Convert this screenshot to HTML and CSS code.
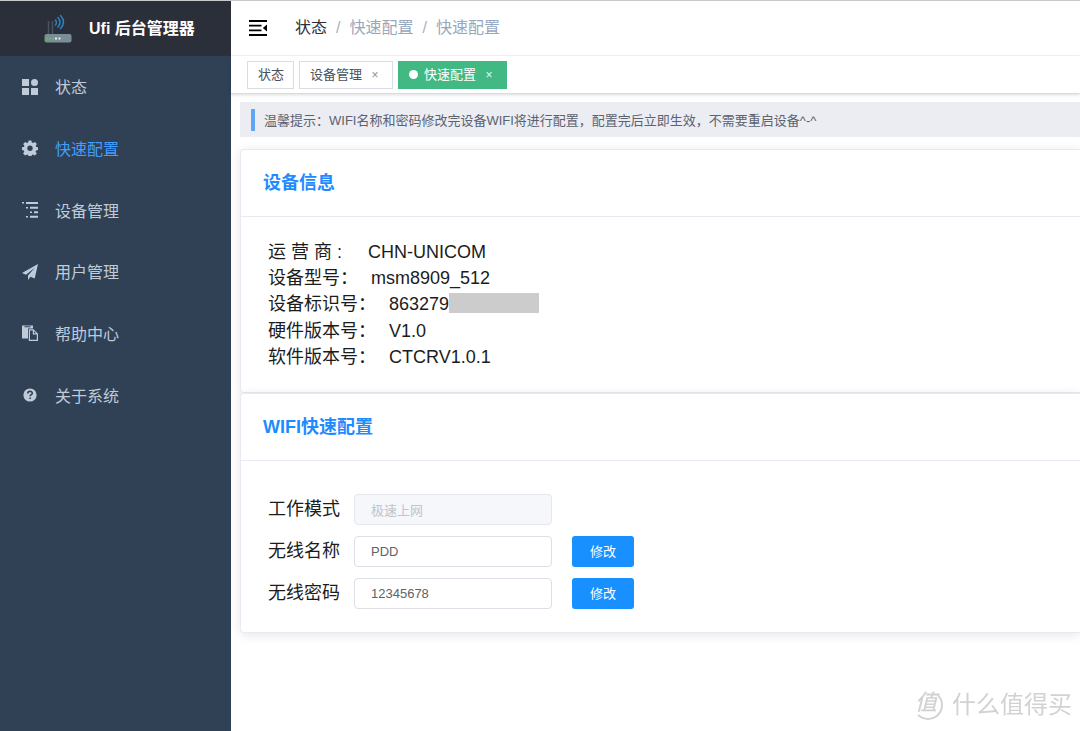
FILE: index.html
```html
<!DOCTYPE html>
<html lang="zh-CN">
<head>
<meta charset="utf-8">
<meta name="viewport" content="width=device-width, initial-scale=1">
<title>Ufi 后台管理器</title>
<link rel="stylesheet" href="styles.css">
</head>
<body>
<div class="app">
  <aside class="sidebar">
    <div class="brand">
      <svg class="brand-logo" viewBox="0 0 28 30" aria-hidden="true">
        <path d="M4.500 7v13M8.500 7v13" stroke="#465460" stroke-width="1.500"/>
        <rect x="0.500" y="20" width="27" height="8.500" rx="2" fill="#7b8d98"/>
        <path d="M2 24.500h8" stroke="#5fc04a" stroke-width="2" stroke-dasharray="2 1"/>
        <path d="M11 24.500h6" stroke="#e4edf0" stroke-width="2" stroke-dasharray="2 1.500"/>
        <path d="M11.500 6q1.800 2.500 0 5M14 3.500q4 4.800 0 9.600M16.500 1.500q6 6.500 0 13" fill="none" stroke="#2c82bd" stroke-width="1.500" stroke-linecap="round"/>
      </svg>
      <h1 class="brand-title">Ufi 后台管理器</h1>
    </div>
    <nav class="menu">
      <a class="menu-item" href="#">
        <svg class="menu-icon" viewBox="0 0 16 16" aria-hidden="true"><path d="M0 0h7v7H0zM0 9h7v7H0zM9 9h7v7H9z"/><circle cx="12.500" cy="3.500" r="3.500"/></svg>
        <span>状态</span>
      </a>
      <a class="menu-item active" href="#">
        <svg class="menu-icon" viewBox="0 0 16 16" aria-hidden="true"><path fill-rule="evenodd" d="M6.600 0.500h2.800l.4 2 1.300.6 1.800-1.200 2 2-1.200 1.800.5 1.200 1.800.4v2.800l-1.900.4-.5 1.300 1.200 1.800-2 2-1.800-1.200-1.200.5-.4 2H6.600l-.4-2-1.300-.5-1.800 1.200-2-2 1.200-1.800-.5-1.200L0 10.100V7.300l1.900-.4.500-1.200-1.200-1.800 2-2L5 3.100l1.200-.6zM8 5.600a2.700 2.700 0 1 0 0 5.400 2.700 2.700 0 0 0 0-5.400z"/></svg>
        <span>快速配置</span>
      </a>
      <a class="menu-item" href="#">
        <svg class="menu-icon" viewBox="0 0 16 16" aria-hidden="true"><path d="M0 0h2v1.500H0zM4 0h12v2H4zM4 5h2v1.500H4zM8 4.700h8v2H8zM8 9.500h2V11H8zM12 9.200h4v2h-4zM4 14h2v1.500H4zM8 13.700h8v2H8z"/></svg>
        <span>设备管理</span>
      </a>
      <a class="menu-item" href="#">
        <svg class="menu-icon" viewBox="0 0 16 16" aria-hidden="true"><path d="M16 0 0 9l4 1.700L13 3.500 6 11.500V16l2.500-3.300 4.200 1.800z"/></svg>
        <span>用户管理</span>
      </a>
      <a class="menu-item" href="#">
        <svg class="menu-icon" viewBox="0 0 16 16" aria-hidden="true"><path fill-rule="evenodd" d="M0 .5h11v3H6v10H0zM2.500 1.300v1h6v-1zM6.800 4.300h4.700l4.500 4.500V16H6.800zM8 5.500v9.300h6.800V9.500h-4v-4zM12 6.200v2.100h2z"/></svg>
        <span>帮助中心</span>
      </a>
      <a class="menu-item" href="#">
        <svg class="menu-icon" viewBox="0 0 16 16" aria-hidden="true"><circle cx="8" cy="8" r="6.600"/><path class="menu-icon-mark" d="M5.800 6.600C5.800 3.500 10.300 3.700 10.300 6.200 10.300 7.700 8.200 7.700 8.200 9.300M8.200 10.600v1.500"/></svg>
        <span>关于系统</span>
      </a>
    </nav>
  </aside>

  <div class="main">
    <header class="navbar">
      <button class="fold" type="button" aria-label="收起菜单">
        <svg viewBox="0 0 18 16" aria-hidden="true"><path d="M0 1h18M0 5.700h12.500M0 10.300h12.500M0 15h18" stroke="#000" stroke-width="1.800"/><path d="M18 4.500v7L13.800 8z"/></svg>
      </button>
      <nav class="breadcrumb" aria-label="路径">
        <a class="crumb crumb-link" href="#">状态</a>
        <span class="slash">/</span>
        <span class="crumb">快速配置</span>
        <span class="slash">/</span>
        <span class="crumb">快速配置</span>
      </nav>
    </header>

    <div class="tags">
      <div class="tag"><a href="#">状态</a></div>
      <div class="tag"><a href="#">设备管理</a><button class="tag-close" type="button" aria-label="关闭设备管理">×</button></div>
      <div class="tag tag-active"><a href="#">快速配置</a><button class="tag-close" type="button" aria-label="关闭快速配置">×</button></div>
    </div>

    <main class="content">
      <p class="notice">温馨提示：WIFI名称和密码修改完设备WIFI将进行配置，配置完后立即生效，不需要重启设备^-^</p>

      <section class="card">
        <h2 class="card-title">设备信息</h2>
        <dl class="info">
          <div class="info-row info-row-wide"><dt>运 营 商 :</dt><dd>CHN-UNICOM</dd></div>
          <div class="info-row"><dt>设备型号：</dt><dd>msm8909_512</dd></div>
          <div class="info-row"><dt>设备标识号：</dt><dd>863279<span class="mask"></span></dd></div>
          <div class="info-row"><dt>硬件版本号：</dt><dd>V1.0</dd></div>
          <div class="info-row"><dt>软件版本号：</dt><dd>CTCRV1.0.1</dd></div>
        </dl>
      </section>

      <section class="card">
        <h2 class="card-title">WIFI快速配置</h2>
        <form class="form">
          <label for="mode">工作模式</label>
          <input class="field" id="mode" type="text" value="极速上网" disabled>
          <label class="row-start" for="ssid">无线名称</label>
          <input class="field" id="ssid" type="text" value="PDD">
          <button class="btn" type="button">修改</button>
          <label class="row-start" for="password">无线密码</label>
          <input class="field" id="password" type="text" value="12345678">
          <button class="btn" type="button">修改</button>
        </form>
      </section>
    </main>
  </div>
</div>
<div class="watermark">
  <span class="watermark-badge">值</span>
  <span>什么值得买</span>
</div>
</body>
</html>
```
FILE: styles.css
```css
* {
  box-sizing: border-box;
}

body {
  margin: 0;
  background: #fff;
  color: #1c1c1c;
  font-family: "Liberation Sans", "Noto Sans CJK SC", sans-serif;
  font-size: 18px;
}

a {
  color: inherit;
  text-decoration: none;
}

button {
  padding: 0;
  border: 0;
  background: none;
  color: inherit;
  font: inherit;
  cursor: pointer;
}

.app {
  display: flex;
  min-height: 100vh;
  border-top: 1px solid #c9c9cb;
}

/* Sidebar */
.sidebar {
  flex: 0 0 231px;
  background: #304156;
}

.brand {
  display: flex;
  align-items: center;
  gap: 17px;
  height: 55px;
  padding-left: 44px;
  background: #2b2f3a;
  color: #fff;
}

.brand-logo {
  width: 28px;
  height: 30px;
}

.brand-title {
  margin: 0;
  font-size: 16px;
  line-height: 24px;
}

.menu {
  display: grid;
  grid-auto-rows: 1fr;
  height: 370px;
}

.menu-item {
  display: flex;
  align-items: center;
  gap: 17px;
  padding-left: 22px;
  color: #bfcbd9;
  font-size: 16px;
}

.menu-item span {
  padding-bottom: 1px;
}

.menu-item.active span {
  color: #409eff;
}

.menu-icon {
  width: 16px;
  height: 16px;
  fill: #bfcbd9;
}

.menu-icon-mark {
  fill: none;
  stroke: #304156;
  stroke-width: 1.6;
}

/* Top bar */
.main {
  flex: 1;
  min-width: 0;
}

.navbar {
  display: flex;
  align-items: center;
  gap: 28px;
  height: 55px;
  padding-left: 18px;
  border-bottom: 1px solid #f5f5f5;
}

.fold {
  display: flex;
  width: 18px;
  height: 16px;
}

.breadcrumb {
  display: flex;
  align-items: center;
  gap: 9px;
  color: #97a8be;
  font-size: 16px;
  line-height: 24px;
}

.crumb-link {
  color: #303133;
}

.slash {
  color: #a9b1bd;
}

.tags {
  display: flex;
  align-items: center;
  gap: 5px;
  height: 38px;
  padding-left: 16px;
  border-bottom: 1px solid #d8dce5;
  box-shadow: 0 1px 3px rgba(0, 0, 0, 0.14);
}

.tag {
  display: flex;
  align-items: center;
  height: 28px;
  padding: 0 9px 0 10px;
  border: 1px solid #d8dce5;
  color: #495060;
  font-size: 13px;
}

.tag a {
  padding-bottom: 2px;
}

.tag-close {
  width: 16px;
  margin-left: 5px;
  color: #8d929b;
  font-size: 12px;
}

.tag-active {
  border-color: #42b983;
  background: #42b983;
  color: #fff;
}

.tag-active::before {
  content: "";
  width: 9px;
  height: 9px;
  margin-right: 6px;
  border-radius: 50%;
  background: #fff;
}

.tag-active .tag-close {
  color: #e3f5ec;
}

/* Content */
.content {
  padding: 8px 0 40px 9px;
}

.notice {
  display: flex;
  align-items: center;
  height: 35px;
  margin: 0 0 12px;
  padding-left: 11px;
  background: #ebedf3;
  color: #5b6270;
  font-size: 13px;
}

.notice::before {
  content: "";
  width: 4px;
  height: 22px;
  margin-right: 9px;
  background: #5fa5f2;
}

.card {
  border: 1px solid #e8eaf1;
  border-right: 0;
  border-radius: 4px 0 0 4px;
  background: #fff;
  box-shadow: 0 2px 12px rgba(0, 0, 0, 0.1);
}

.card-title {
  margin: 0;
  padding: 19px 22px;
  border-bottom: 1px solid #e8eaf1;
  color: #1e8cff;
  font-size: 18px;
  line-height: 28px;
}

.info {
  display: grid;
  grid-auto-rows: 1fr;
  height: 132px;
  margin: 22px 27px 21px;
}

.info-row {
  display: flex;
  align-items: center;
  gap: 13px;
  line-height: 22px;
}

.info-row-wide {
  gap: 26px;
}

.info dt {
  padding-bottom: 1px;
}

.info dd {
  display: flex;
  align-items: center;
  margin: 0;
  padding-bottom: 1px;
}

.mask {
  width: 90px;
  height: 20px;
  margin-bottom: 2px;
  background: #ccc;
}

.form {
  display: grid;
  grid-template-columns: max-content 198px max-content;
  align-items: center;
  row-gap: 11px;
  padding: 33px 27px 23px;
}

.form label {
  margin-right: 14px;
  padding-bottom: 2px;
  line-height: 24px;
}

.row-start {
  grid-column: 1;
}

.field {
  width: 100%;
  height: 31px;
  padding: 0 16px;
  border: 1px solid #dcdfe6;
  border-radius: 4px;
  background: #fff;
  color: #606266;
  font: inherit;
  font-size: 13px;
}

.field:disabled {
  border-color: #e4e7ed;
  background: #f5f7fa;
  color: #c0c4cc;
}

.btn {
  width: 62px;
  height: 31px;
  margin-left: 20px;
  padding-bottom: 2px;
  border-radius: 3px;
  background: #1890ff;
  color: #fff;
  font-size: 13px;
}

/* Corner mark over the page */
.watermark {
  position: fixed;
  right: 8px;
  bottom: 8px;
  display: flex;
  align-items: center;
  gap: 9px;
  color: #d2d2d2;
  font-size: 24px;
  line-height: 36px;
}

.watermark-badge {
  width: 30px;
  height: 30px;
  border: 2px solid transparent;
  border-right-color: #d2d2d2;
  border-bottom-color: #d2d2d2;
  border-radius: 50%;
  font-size: 22px;
  font-style: italic;
  font-weight: 500;
  line-height: 22px;
}
```
